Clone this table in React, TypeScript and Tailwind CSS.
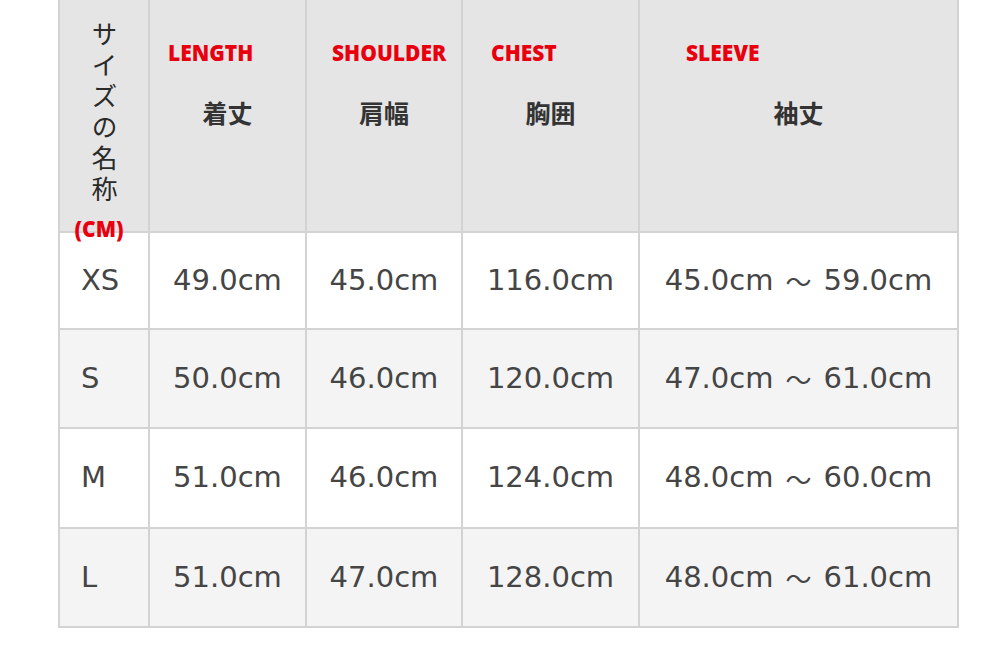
const labelFont = "font-['Open_Sans','Liberation_Sans',sans-serif]";

const headers = [
  { en: 'LENGTH', ja: '着丈', pad: 'pl-[18px]' },
  { en: 'SHOULDER', ja: '肩幅', pad: 'pl-[25px]' },
  { en: 'CHEST', ja: '胸囲', pad: 'pl-[28px]' },
  { en: 'SLEEVE', ja: '袖丈', pad: 'pl-[46px]' },
];

const rows = [
  { size: 'XS', h: 'h-[97px]', bg: 'bg-white', values: ['49.0cm', '45.0cm', '116.0cm', ['45.0cm', '59.0cm']] },
  { size: 'S', h: 'h-[99px]', bg: 'bg-[#f4f4f4]', values: ['50.0cm', '46.0cm', '120.0cm', ['47.0cm', '61.0cm']] },
  { size: 'M', h: 'h-[100px]', bg: 'bg-white', values: ['51.0cm', '46.0cm', '124.0cm', ['48.0cm', '60.0cm']] },
  { size: 'L', h: 'h-[99px]', bg: 'bg-[#f4f4f4]', values: ['51.0cm', '47.0cm', '128.0cm', ['48.0cm', '61.0cm']] },
];

function RedLabel({ children }: { children: string }) {
  return (
    <span
      className={`inline-block ${labelFont} text-[21px] leading-[21px] font-extrabold text-[#e8000f] scale-y-[1.12]`}
    >
      {children}
    </span>
  );
}

export default function App() {
  return (
    <div className="min-h-[647px] w-full bg-white">
      <div className="ml-[58px] w-[901px] border-l-2 border-[#d3d3d3] grid grid-cols-[90px_157px_156px_177px_319px]">
        {/* header */}
        <div className="h-[233px] bg-[#e5e5e5] border-r-2 border-b-2 border-[#d3d3d3] flex flex-col items-center pt-[21px]">
          <div className="[writing-mode:vertical-rl] whitespace-nowrap shrink-0 font-['Noto_Sans_CJK_JP',sans-serif] text-[26px] leading-[28px] tracking-[5px] text-[#2a2a2a]">
            サイズの名称
          </div>
          <div className="relative z-10 mt-[11px] -ml-[10px]">
            <RedLabel>(CM)</RedLabel>
          </div>
        </div>
        {headers.map((h) => (
          <div
            key={h.en}
            className="h-[233px] bg-[#e5e5e5] border-r-2 border-b-2 border-[#d3d3d3] flex flex-col pt-[42px]"
          >
            <div className={h.pad}>
              <RedLabel>{h.en}</RedLabel>
            </div>
            <div className="mt-[34px] text-center font-['Noto_Sans_CJK_JP',sans-serif] text-[25px] leading-[25px] font-bold text-[#333]">
              {h.ja}
            </div>
          </div>
        ))}

        {/* body */}
        {rows.map((r) => (
          <div key={r.size} className="contents">
            <div
              className={`${r.h} ${r.bg} border-r-2 border-b-2 border-[#d3d3d3] flex items-center pl-[21px] font-['DejaVu_Sans',sans-serif] text-[29px] text-[#454545]`}
            >
              {r.size}
            </div>
            {r.values.map((v, i) => (
              <div
                key={i}
                className={`${r.h} ${r.bg} border-r-2 border-b-2 border-[#d3d3d3] flex items-center justify-center font-['DejaVu_Sans','Noto_Sans_CJK_JP',sans-serif] text-[29px] text-[#454545] whitespace-nowrap`}
              >
                {Array.isArray(v) ? (
                  <>
                    {v[0]}
                    <span className="mx-[12px] font-['Noto_Sans_CJK_JP',sans-serif] text-[26px]">～</span>
                    {v[1]}
                  </>
                ) : (
                  v
                )}
              </div>
            ))}
          </div>
        ))}
      </div>
    </div>
  );
}
